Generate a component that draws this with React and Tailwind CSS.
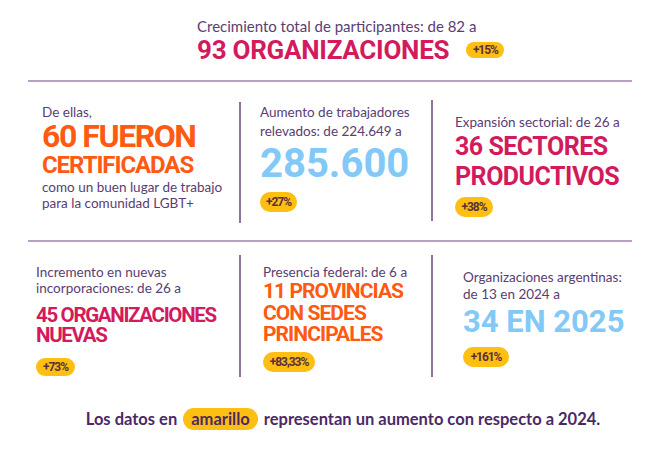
import React from "react";

const Badge = ({ children, className = "" }) => (
  <span
    className={`inline-flex items-center justify-center rounded-full bg-[#fdbf12] px-[5px] font-['Roboto',sans-serif] text-[12px] font-bold tracking-[-0.09em] text-[#5b2f3c] ${className}`}
  >
    {children}
  </span>
);

const Label = ({ children, className = "" }) => (
  <p
    className={`font-['Lato','Noto_Sans',sans-serif] text-[13.5px] text-[#5a3d72] ${className}`}
  >
    {children}
  </p>
);

const Divider = ({ className = "" }) => (
  <div className={`w-[2px] shrink-0 bg-[#8d7599] ${className}`} />
);

export default function App() {
  return (
    <div className="relative h-[449px] w-[660px] overflow-hidden bg-white font-['Roboto',sans-serif]">
      {/* total participants */}
      <div className="h-[80px] pl-[197px] pt-[18px]">
        <Label className="text-[15px] leading-[17px]">
          Crecimiento total de participantes: de 82 a
        </Label>
        <div className="flex items-center gap-[17px]">
          <h2 className="text-[26px] font-bold leading-[30px] tracking-[-0.01em] text-[#d31a5c]">
            93 ORGANIZACIONES
          </h2>
          <Badge className="h-[16px] w-[38px]">+15%</Badge>
        </div>
      </div>

      <div className="mx-[28px] h-[2px] bg-[#b6a1c5]" />

      {/* middle row */}
      <div className="mx-[28px] flex h-[158px] items-start">
        <div className="w-[211px] pl-[14px] pt-[22px]">
          <Label className="leading-[16px]">De ellas,</Label>
          <p className="text-[32px] font-bold leading-[33px] tracking-[-0.045em] text-[#ff5a12]">
            60 FUERON
          </p>
          <p className="text-[24px] font-bold leading-[24px] tracking-[-0.045em] text-[#ff5a12]">
            CERTIFICADAS
          </p>
          <Label className="mt-[2px] leading-[16px]">
            como un buen lugar de trabajo
            <br />
            para la comunidad LGBT+
          </Label>
        </div>
        <Divider className="mt-[20px] h-[121px]" />
        <div className="w-[190px] pl-[19px] pt-[21px]">
          <Label className="leading-[19px]">
            Aumento de trabajadores
            <br />
            relevados: de 224.649 a
          </Label>
          <p className="mt-[2px] text-[40px] font-bold leading-[41px] text-[#82c9f7]">
            285.600
          </p>
          <Badge className="mt-[8px] h-[20px] w-[37px]">+27%</Badge>
        </div>
        <Divider className="mt-[18px] h-[121px]" />
        <div className="flex-1 pl-[22px] pt-[32px]">
          <Label className="leading-[16px]">Expansión sectorial: de 26 a</Label>
          <p className="mt-[2px] text-[25px] font-bold leading-[30px] tracking-[-0.02em] text-[#d31a5c]">
            36 SECTORES
            <br />
            PRODUCTIVOS
          </p>
          <Badge className="mt-[5px] h-[20px] w-[38px]">+38%</Badge>
        </div>
      </div>

      <div className="mx-[28px] h-[2px] bg-[#b6a1c5]" />

      {/* bottom row */}
      <div className="mx-[28px] flex h-[148px] items-start">
        <div className="w-[211px] pl-[8px] pt-[22px]">
          <Label className="leading-[16px]">
            Incremento en nuevas
            <br />
            incorporaciones: de 26 a
          </Label>
          <p className="mt-[9px] text-[20.5px] font-bold leading-[20px] tracking-[-0.065em] text-[#d31a5c]">
            45 ORGANIZACIONES
            <br />
            NUEVAS
          </p>
          <Badge className="mt-[13px] h-[18px] w-[39px]">+73%</Badge>
        </div>
        <Divider className="mt-[13px] h-[122px]" />
        <div className="w-[190px] pl-[22px] pt-[22px]">
          <Label className="leading-[16px]">Presencia federal: de 6 a</Label>
          <p className="mt-[1px] text-[21px] font-bold leading-[21.5px] tracking-[-0.045em] text-[#ff5a12]">
            11 PROVINCIAS
            <br />
            CON SEDES
            <br />
            PRINCIPALES
          </p>
          <Badge className="mt-[6px] h-[20px] w-[52px]">+83,33%</Badge>
        </div>
        <Divider className="mt-[13px] h-[122px]" />
        <div className="flex-1 pl-[30px] pt-[27px]">
          <Label className="leading-[17px]">
            Organizaciones argentinas:
            <br />
            de 13 en 2024 a
          </Label>
          <p className="mt-[3px] text-[31px] font-bold leading-[31px] text-[#82c9f7]">
            34 EN 2025
          </p>
          <Badge className="mt-[10px] h-[20px] w-[46px]">+161%</Badge>
        </div>
      </div>

      {/* footer */}
      <div className="flex justify-center pl-[26px] pt-[17px]">
        <p className="flex items-center gap-[6px] font-['Lato',sans-serif] text-[16.5px] font-bold text-[#4a2a66]">
          Los datos en
          <span className="inline-flex h-[22px] items-center rounded-full bg-[#fdbf12] px-[8px] text-[#4a2a66]">
            amarillo
          </span>
          representan un aumento con respecto a 2024.
        </p>
      </div>
    </div>
  );
}
